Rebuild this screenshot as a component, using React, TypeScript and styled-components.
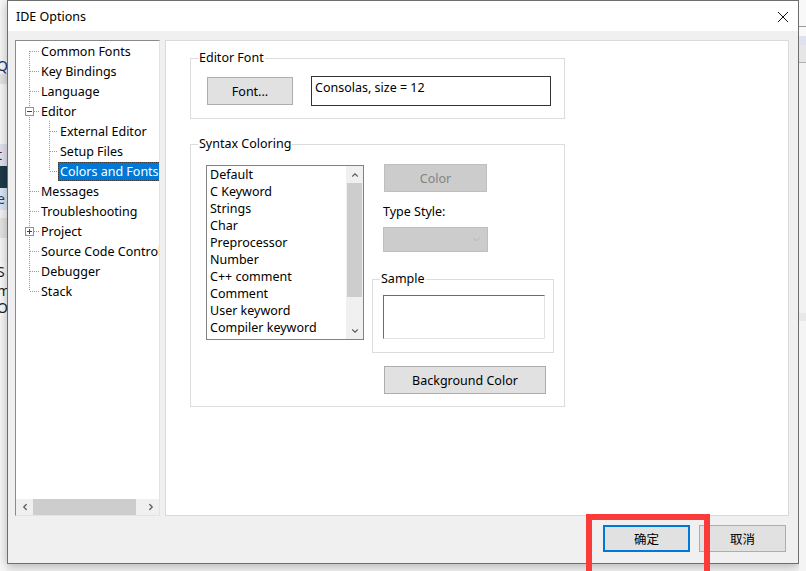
import styled, { createGlobalStyle, css } from 'styled-components';
import { ChevronLeft, ChevronRight, ChevronUp, ChevronDown } from 'lucide-react';

const GlobalStyle = createGlobalStyle`
  html, body {
    margin: 0;
    padding: 0;
    background: #f3f3f3;
  }
  body {
    font-family: "Noto Sans", "Noto Sans CJK SC", sans-serif;
    font-size: 12.5px;
    color: #000;
  }
`;

const UI_FONT = `"Noto Sans", "Noto Sans CJK SC", sans-serif`;

const Screen = styled.div`
  position: relative;
  width: 806px;
  height: 571px;
  display: flex;
  overflow: hidden;
  background: #f3f3f3;
`;

const Strip = styled.div<{ $w: number }>`
  width: ${(p) => p.$w}px;
  flex: none;
  display: flex;
  flex-direction: column;
  overflow: hidden;
`;

const Bit = styled.div<{ $h: number; $bg: string; $fg?: string }>`
  height: ${(p) => p.$h}px;
  flex: none;
  background: ${(p) => p.$bg};
  color: ${(p) => p.$fg || '#000'};
  font-family: ${UI_FONT};
  font-size: 14px;
  line-height: ${(p) => p.$h}px;
  white-space: nowrap;
  text-indent: -3px;
  overflow: hidden;
`;

const Dialog = styled.div`
  width: 792px;
  height: 564px;
  flex: none;
  box-sizing: border-box;
  border: 1px solid #6e6e6e;
  background: #f0f0f0;
  display: flex;
  flex-direction: column;
  box-shadow: 0 2px 10px rgba(0, 0, 0, 0.28);
`;

const TitleBar = styled.div`
  height: 30px;
  flex: none;
  background: #fff;
  display: flex;
  align-items: center;
  justify-content: space-between;
  padding: 0 8px 0 8px;
  font-size: 12.5px;
`;

const CloseIcon = () => (
  <svg width="12" height="12" viewBox="0 0 12 12" style={{ marginRight: 1, marginTop: 1 }}>
    <path d="M1 1 L11 11 M11 1 L1 11" stroke="#111" strokeWidth="1" fill="none" />
  </svg>
);

const Body = styled.div`
  flex: 1;
  display: flex;
  flex-direction: column;
  padding: 9px 9px 11px 7px;
`;

const Content = styled.div`
  height: 476px;
  display: flex;
  gap: 5px;
`;

/* ---------- tree ---------- */

const Tree = styled.div`
  width: 145px;
  flex: none;
  box-sizing: border-box;
  border: 1px solid;
  border-color: #8a8a8a #e3e3e3 #e3e3e3 #8a8a8a;
  background: #fff;
  display: flex;
  flex-direction: column;
`;

const TreeList = styled.div`
  flex: 1;
  overflow: hidden;
`;

const TreeRow = styled.div`
  height: 20px;
  display: flex;
  align-items: center;
  white-space: nowrap;
`;

type Line = 'full' | 'top' | 'bottom' | 'none';

const dots = (dir: string) =>
  `repeating-linear-gradient(${dir}, #9a9a9a 0 1px, transparent 1px 2px)`;

const Gutter = styled.span<{ $w: number; $x: number; $line: Line; $branch?: boolean }>`
  width: ${(p) => p.$w}px;
  height: 20px;
  flex: none;
  display: flex;
  align-items: center;
  box-sizing: border-box;
  padding-left: ${(p) => p.$x - 4}px;
  background-repeat: no-repeat;
  ${(p) => {
    const imgs: string[] = [];
    const sizes: string[] = [];
    const pos: string[] = [];
    if (p.$line !== 'none') {
      imgs.push(dots('to bottom'));
      sizes.push(p.$line === 'full' ? '1px 100%' : '1px 50%');
      pos.push(`${p.$x}px ${p.$line === 'bottom' ? '100%' : '0'}`);
    }
    if (p.$branch) {
      imgs.push(dots('to right'));
      sizes.push('10px 1px');
      pos.push(`${p.$x + 1}px 10px`);
    }
    return css`
      background-image: ${imgs.join(', ') || 'none'};
      background-size: ${sizes.join(', ') || 'auto'};
      background-position: ${pos.join(', ') || '0 0'};
    `;
  }}
`;

const Expander = styled.span`
  width: 9px;
  height: 9px;
  box-sizing: border-box;
  border: 1px solid #919191;
  background: #fff;
  display: flex;
  align-items: center;
  justify-content: center;
`;

const Minus = styled.span`
  width: 5px;
  height: 1px;
  background: #26457e;
`;

const Plus = styled.span`
  width: 5px;
  height: 5px;
  background:
    linear-gradient(#26457e, #26457e) center / 5px 1px no-repeat,
    linear-gradient(#26457e, #26457e) center / 1px 5px no-repeat;
`;

const TreeLabel = styled.span<{ $selected?: boolean }>`
  padding: 0 2px;
  height: 19px;
  line-height: 19px;
  box-sizing: border-box;
  ${(p) =>
    p.$selected &&
    css`
      background: #0078d7;
      color: #fff;
      outline: 1px dotted #3a3a3a;
      outline-offset: -1px;
    `}
`;

const HScroll = styled.div`
  height: 16px;
  flex: none;
  background: #f0f0f0;
  display: flex;
  align-items: stretch;
`;

const ScrollBtn = styled.span`
  width: 17px;
  flex: none;
  display: flex;
  align-items: center;
  justify-content: center;
  color: #606060;
`;

const HThumb = styled.span`
  width: 103px;
  background: #cdcdcd;
`;

const HTrackRest = styled.span`
  flex: 1;
`;

type TreeItem = {
  label: string;
  depth: 0 | 1;
  line: Line;
  childLine?: Line;
  expander?: 'minus' | 'plus';
  selected?: boolean;
};

const treeItems: TreeItem[] = [
  { label: 'Common Fonts', depth: 0, line: 'bottom' },
  { label: 'Key Bindings', depth: 0, line: 'full' },
  { label: 'Language', depth: 0, line: 'full' },
  { label: 'Editor', depth: 0, line: 'full', expander: 'minus' },
  { label: 'External Editor', depth: 1, line: 'full', childLine: 'full' },
  { label: 'Setup Files', depth: 1, line: 'full', childLine: 'full' },
  { label: 'Colors and Fonts', depth: 1, line: 'full', childLine: 'top', selected: true },
  { label: 'Messages', depth: 0, line: 'full' },
  { label: 'Troubleshooting', depth: 0, line: 'full' },
  { label: 'Project', depth: 0, line: 'full', expander: 'plus' },
  { label: 'Source Code Control', depth: 0, line: 'full' },
  { label: 'Debugger', depth: 0, line: 'full' },
  { label: 'Stack', depth: 0, line: 'top' },
];

const OptionsTree = () => (
  <Tree>
    <TreeList>
      {treeItems.map((item) => (
        <TreeRow key={item.label}>
          {item.depth === 0 ? (
            <Gutter $w={23} $x={13} $line={item.line} $branch>
              {item.expander && (
                <Expander>{item.expander === 'minus' ? <Minus /> : <Plus />}</Expander>
              )}
            </Gutter>
          ) : (
            <>
              <Gutter $w={25} $x={13} $line="full" />
              <Gutter $w={17} $x={8} $line={item.childLine || 'full'} $branch />
            </>
          )}
          <TreeLabel $selected={item.selected}>{item.label}</TreeLabel>
        </TreeRow>
      ))}
    </TreeList>
    <HScroll>
      <ScrollBtn>
        <ChevronLeft size={10} strokeWidth={3.2} />
      </ScrollBtn>
      <HThumb />
      <HTrackRest />
      <ScrollBtn>
        <ChevronRight size={10} strokeWidth={3.2} />
      </ScrollBtn>
    </HScroll>
  </Tree>
);

/* ---------- right panel ---------- */

const Panel = styled.div`
  flex: 1;
  box-sizing: border-box;
  border: 1px solid #dadada;
  background: #fff;
  padding: 9px 0 0 24px;
  display: flex;
  flex-direction: column;
  align-items: flex-start;
`;

const Group = styled.fieldset<{ $w: number }>`
  width: ${(p) => p.$w}px;
  box-sizing: border-box;
  margin: 0;
  border: 1px solid #dcdcdc;
  padding: 0;
  min-width: 0;
`;

const Legend = styled.legend`
  margin-left: 7px;
  padding: 0 1px;
  line-height: 16px;
  font-size: 12.5px;
`;

const EditorFontRow = styled.div`
  display: flex;
  align-items: center;
  padding: 10px 0 12px 16px;
  gap: 18px;
`;

const Button = styled.button<{ $w: number; $h?: number; $disabled?: boolean; $default?: boolean }>`
  width: ${(p) => p.$w}px;
  height: ${(p) => p.$h ?? 28}px;
  box-sizing: border-box;
  margin: 0;
  padding: 0;
  font-family: ${UI_FONT};
  font-size: 12.5px;
  color: #000;
  background: #e1e1e1;
  border: 1px solid #adadad;
  border-radius: 0;
  ${(p) =>
    p.$disabled &&
    css`
      background: #cccccc;
      border-color: #bfbfbf;
      color: #838383;
    `}
  ${(p) =>
    p.$default &&
    css`
      border: 2px solid #0078d7;
    `}
`;

const TextBox = styled.div`
  width: 240px;
  height: 30px;
  box-sizing: border-box;
  border: 1px solid #333;
  padding: 2px 3px;
  line-height: 18px;
`;

const SyntaxBody = styled.div`
  display: flex;
  align-items: flex-start;
  padding: 12px 0 12px 15px;
`;

const ListBox = styled.div`
  width: 158px;
  height: 175px;
  margin-top: 1px;
  box-sizing: border-box;
  border: 1px solid #828282;
  display: flex;
`;

const ListItems = styled.div`
  flex: 1;
  padding-left: 3px;
  overflow: hidden;
`;

const ListItem = styled.div`
  height: 17px;
  line-height: 17px;
  white-space: nowrap;
`;

const VScroll = styled.div`
  width: 17px;
  flex: none;
  background: #f0f0f0;
  display: flex;
  flex-direction: column;
`;

const VScrollBtn = styled.span`
  height: 17px;
  flex: none;
  display: flex;
  align-items: center;
  justify-content: center;
  color: #606060;
`;

const VThumb = styled.span`
  height: 114px;
  margin: 0 1px;
  background: #cdcdcd;
`;

const VTrackRest = styled.span`
  flex: 1;
`;

const SideColumn = styled.div`
  margin-left: 8px;
  display: flex;
  flex-direction: column;
  align-items: flex-start;
`;

const FieldLabel = styled.div`
  margin: 12px 0 0 11px;
  line-height: 16px;
`;

const Combo = styled.div`
  width: 105px;
  height: 25px;
  margin: 7px 0 0 11px;
  box-sizing: border-box;
  background: #cccccc;
  border: 1px solid #bfbfbf;
  display: flex;
  align-items: center;
  justify-content: flex-end;
  padding-right: 5px;
  color: #a6a6a6;
`;

const SampleBox = styled.div`
  width: 162px;
  height: 44px;
  margin: 8px 0 13px 10px;
  box-sizing: border-box;
  background: #fff;
  border: 1px solid;
  border-color: #6d6d6d #e3e3e3 #e3e3e3 #6d6d6d;
`;

const syntaxItems = [
  'Default',
  'C Keyword',
  'Strings',
  'Char',
  'Preprocessor',
  'Number',
  'C++ comment',
  'Comment',
  'User keyword',
  'Compiler keyword',
];

const SettingsPanel = () => (
  <Panel>
    <Group $w={375}>
      <Legend>Editor Font</Legend>
      <EditorFontRow>
        <Button $w={86}>Font...</Button>
        <TextBox>Consolas, size = 12</TextBox>
      </EditorFontRow>
    </Group>
    <Group $w={375} style={{ marginTop: 17 }}>
      <Legend>Syntax Coloring</Legend>
      <SyntaxBody>
        <ListBox>
          <ListItems>
            {syntaxItems.map((s) => (
              <ListItem key={s}>{s}</ListItem>
            ))}
          </ListItems>
          <VScroll>
            <VScrollBtn>
              <ChevronUp size={10} strokeWidth={2.6} />
            </VScrollBtn>
            <VThumb />
            <VTrackRest />
            <VScrollBtn>
              <ChevronDown size={10} strokeWidth={2.6} />
            </VScrollBtn>
          </VScroll>
        </ListBox>
        <SideColumn>
          <Button $w={103} $disabled style={{ marginLeft: 12 }}>
            Color
          </Button>
          <FieldLabel>Type Style:</FieldLabel>
          <Combo>
            <ChevronDown size={11} strokeWidth={1.2} />
          </Combo>
          <Group $w={182} style={{ marginTop: 19 }}>
            <Legend>Sample</Legend>
            <SampleBox />
          </Group>
          <Button $w={162} style={{ marginLeft: 12, marginTop: 13 }}>
            Background Color
          </Button>
        </SideColumn>
      </SyntaxBody>
    </Group>
  </Panel>
);

/* ---------- footer ---------- */

const Footer = styled.div`
  display: flex;
  justify-content: flex-end;
  gap: 9px;
  padding: 9px 3px 0 0;
`;

const Highlight = styled.div`
  position: absolute;
  left: 586px;
  top: 514px;
  width: 124px;
  height: 70px;
  box-sizing: border-box;
  border: 6px solid #fb3a3a;
  pointer-events: none;
`;

const leftBits: [number, string, string?, string?][] = [
  [58, '#f7f7f7'],
  [16, '#f7f7f7', '#1c2c6c', 'Q'],
  [10, '#e3e3e3'],
  [60, '#f7f7f7'],
  [22, '#e2e2ee', '#6b1040', 't'],
  [22, '#1e3a4a'],
  [22, '#dbe7f5', '#1c3c7c', 'e'],
  [8, '#f3f3f3'],
  [20, '#e4e4e4'],
  [24, '#f7f7f7'],
  [20, '#fafafa', '#222', 'S'],
  [17, '#fafafa', '#222', 'm'],
  [17, '#fafafa', '#222', 'O'],
  [300, '#f7f7f7'],
];

const rightBits: [number, string][] = [
  [26, '#f8f8f8'],
  [1, '#9a9a9a'],
  [9, '#f8f8f8'],
  [9, '#dfe2ee'],
  [17, '#e6e6e6'],
  [1, '#b0b0b0'],
  [250, '#f2f2f2'],
  [8, '#e8e8e8'],
  [250, '#f4f4f4'],
];

export default function App() {
  return (
    <>
      <GlobalStyle />
      <Screen>
        <Strip $w={7}>
          {leftBits.map(([h, bg, fg, ch], i) => (
            <Bit key={i} $h={h} $bg={bg} $fg={fg}>
              {ch}
            </Bit>
          ))}
        </Strip>
        <Dialog>
          <TitleBar>
            <span>IDE Options</span>
            <CloseIcon />
          </TitleBar>
          <Body>
            <Content>
              <OptionsTree />
              <SettingsPanel />
            </Content>
            <Footer>
              <Button $w={87} $h={27} $default>
                确定
              </Button>
              <Button $w={87} $h={27}>
                取消
              </Button>
            </Footer>
          </Body>
        </Dialog>
        <Strip $w={7}>
          {rightBits.map(([h, bg], i) => (
            <Bit key={i} $h={h} $bg={bg} />
          ))}
        </Strip>
        <Highlight />
      </Screen>
    </>
  );
}
